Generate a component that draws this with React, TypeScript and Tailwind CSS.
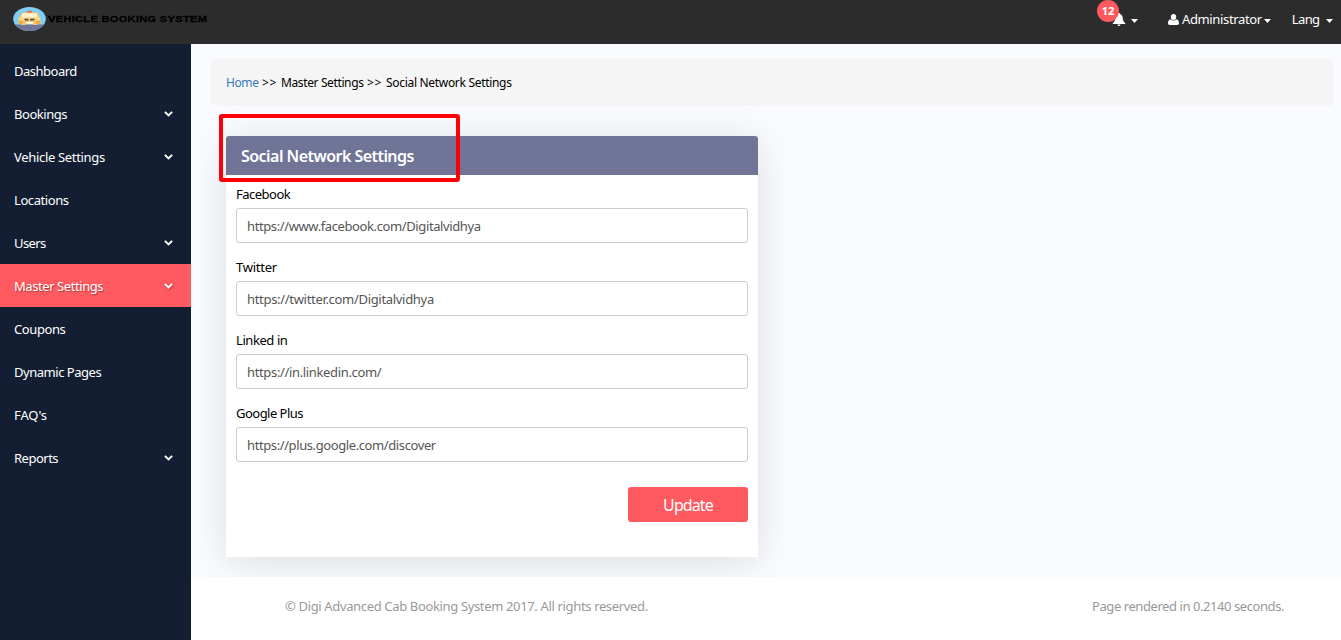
import React from "react";

const menu = [
  { label: "Dashboard", track: "tracking-[-0.5px]" },
  { label: "Bookings", sub: true, track: "tracking-[-0.45px]" },
  { label: "Vehicle Settings", sub: true, track: "tracking-[-0.32px]" },
  { label: "Locations", track: "tracking-[-0.42px]" },
  { label: "Users", sub: true, track: "tracking-[-0.6px]" },
  { label: "Master Settings", sub: true, active: true, track: "tracking-[-0.43px]" },
  { label: "Coupons", track: "tracking-[-0.4px]" },
  { label: "Dynamic Pages", track: "tracking-[-0.47px]" },
  { label: "FAQ's", track: "tracking-[-0.1px]" },
  { label: "Reports", sub: true, track: "tracking-[-0.5px]" },
];

const fields = [
  { label: "Facebook", value: "https://www.facebook.com/Digitalvidhya", track: "tracking-[-0.39px]", labelTrack: "tracking-[-0.5px]" },
  { label: "Twitter", value: "https://twitter.com/Digitalvidhya", track: "tracking-[-0.31px]", labelTrack: "tracking-[-0.25px]" },
  { label: "Linked in", value: "https://in.linkedin.com/", track: "tracking-[-0.35px]", labelTrack: "tracking-[-0.42px]" },
  { label: "Google Plus", value: "https://plus.google.com/discover", track: "tracking-[-0.4px]", labelTrack: "tracking-[-0.52px]" },
];

function Caret({ className = "" }: { className?: string }) {
  return (
    <svg className={`h-1 w-[7px] shrink-0 ${className}`} viewBox="0 0 7 4" fill="currentColor">
      <path d="M0 0H7L3.5 4Z" />
    </svg>
  );
}

function Logo() {
  return (
    <svg className="h-[25px] w-[33px] shrink-0" viewBox="0 0 33 25">
      <defs>
        <clipPath id="badge">
          <ellipse cx="16.5" cy="12" rx="16.3" ry="12" />
        </clipPath>
      </defs>
      <g clipPath="url(#badge)">
        <path fill="#7dcff5" d="M0 0h33v25H0z" />
        <path fill="#70759a" d="M0 17.500h33v7.500H0z" />
      </g>
      <rect x="14" y="3.800" width="5" height="2.200" rx="0.8" fill="#ee6543" />
      <path fill="#f8c66a" d="M8.500 5.500h16l1.500 4 1.500 1v6.500h-3V18h-4v-.8h-8v.8h-4v-1h-3v-6.500l1.500-1z" />
      <path fill="#fff0cf" d="M9.500 6.300h14l1.500 4.200H8z" />
      <path fill="#fbd98f" d="M6 11h21v2.500H6z" />
      <path fill="#54493d" d="M11 11.800h4.500v1.700H12zM17 11.800h5l-1 1.700h-4z" />
      <path fill="#f2a83e" d="M6 13.800h4v3H6zM23 13.800h4v3h-4z" />
      <path fill="#fff" d="M13 15h7v1.700h-7z" />
    </svg>
  );
}

export default function App() {
  return (
    <div className="flex h-[640px] w-[1341px] flex-col overflow-hidden bg-white font-['Noto_Sans','Open_Sans',sans-serif] text-[13px] leading-[18px] text-black">
      <header className="flex h-11 shrink-0 items-start bg-[#2c2c2c] text-white">
        <div className="flex items-start pt-[7px] pl-[13px] text-black">
          <Logo />
          <span className="mt-[6px] ml-[2px] origin-left scale-x-[1.24] font-['Liberation_Sans',Arial,sans-serif] text-[9px] leading-[12px] font-bold whitespace-nowrap tracking-[0.2px] [-webkit-text-stroke:0.3px_black]">
            VEHICLE BOOKING SYSTEM
          </span>
        </div>
        <nav className="ml-auto flex h-[38px] items-center pr-[8.5px] whitespace-nowrap">
          <div className="relative mr-[30px] flex items-center">
            <svg className="h-[13px] w-[14px]" viewBox="0 0 14 13" fill="#fff">
              <path d="M7 0c.7 0 1 .4 1 1 1.800.500 2.500 2 2.700 4 .2 2.600 1 4 2.600 5.200V11H.7v-.8C2.300 9 3.100 7.600 3.300 5 3.500 3 4.200 1.500 6 1c0-.6.300-1 1-1ZM5.500 11.500h3c0 .900-.6 1.500-1.500 1.500s-1.500-.6-1.500-1.500Z" />
            </svg>
            <span className="absolute top-[-13px] left-[-15px] flex size-[22px] items-center justify-center rounded-full bg-[#ff5a60] text-[11px] leading-none font-bold">
              12
            </span>
            <Caret className="mt-[3px] ml-[5px]" />
          </div>
          <div className="mr-[21px] flex items-center">
            <svg className="mr-[3px] h-[11px] w-[11px]" viewBox="0 0 11 11" fill="#fff">
              <ellipse cx="5.500" cy="3" rx="2.700" ry="3" />
              <path d="M2.700 5.200C.8 5.600 0 7 0 9.300 0 10.400.7 11 1.700 11h7.600c1 0 1.700-.6 1.700-1.700 0-2.300-.8-3.700-2.700-4.100a3.700 3.700 0 0 1-5.600 0Z" />
            </svg>
            <span className="tracking-[-0.36px]">Administrator</span>
            <Caret className="mt-[3px] ml-[2px]" />
          </div>
          <div className="flex items-center">
            <span className="tracking-[-0.6px]">Lang</span>
            <Caret className="mt-[3px] ml-[6px]" />
          </div>
        </nav>
      </header>

      <div className="flex min-h-0 flex-1">
        <aside className="w-[191px] shrink-0 bg-[#131e32] pt-[5px] text-white">
          {menu.map((m) => (
            <a
              key={m.label}
              className={`flex h-[43px] items-center justify-between pr-[18px] pl-[14px] whitespace-nowrap ${
                m.active ? "bg-[#ff5a60] [text-shadow:1px_1px_1px_rgba(0,0,0,0.35)]" : ""
              }`}
            >
              <span className={m.track}>{m.label}</span>
              {m.sub && (
                <svg
                  className={`h-[6px] w-[9px] ${m.active ? "drop-shadow-[1px_1px_1px_rgba(0,0,0,0.35)]" : ""}`}
                  viewBox="0 0 9 6"
                  fill="none"
                  stroke="#fff"
                  strokeWidth="2"
                >
                  <path d="M.9.9 4.500 4.400 8.100.9" />
                </svg>
              )}
            </a>
          ))}
        </aside>

        <div className="flex min-w-0 flex-1 flex-col">
          <main className="flex h-[533px] shrink-0 flex-col items-start bg-[#fafbff] pt-[15px] pr-[7px] pl-5">
            <div className="flex h-[47px] w-full items-center rounded-[5px] bg-[#f5f5f5] pl-[15px] text-xs whitespace-nowrap">
              <a className="w-[36px] tracking-[-0.4px] text-[#337ab7]">Home</a>
              <span className="w-[19px] tracking-[0.6px]">&gt;&gt;</span>
              <span className="w-[86px] tracking-[-0.38px]">Master Settings</span>
              <span className="w-[19px] tracking-[0.6px]">&gt;&gt;</span>
              <span className="tracking-[-0.31px]">Social Network Settings</span>
            </div>

            <section className="relative mt-[30px] ml-[15px] h-[421px] w-[532px] rounded-t-[3px] bg-white shadow-[0_5px_40px_rgba(0,0,0,0.12)]">
              <h1 className="flex h-[39px] items-center rounded-t-[3px] bg-[#707597] pl-[15px] text-base leading-[20px] font-semibold whitespace-nowrap text-white">
                <span className="tracking-[-0.54px]">Social Network Settings</span>
              </h1>
              <form className="px-[10px] pt-[10px]">
                {fields.map((f) => (
                  <label key={f.label} className="mb-3 block h-[61px] whitespace-nowrap">
                    <span className={`block h-[23px] ${f.labelTrack}`}>{f.label}</span>
                    <span className="flex h-[35px] items-center rounded-[3px] border border-[#ccc] pl-[10px] text-[#555]">
                      <span className={f.track}>{f.value}</span>
                    </span>
                  </label>
                ))}
                <div className="flex justify-end pt-[10px]">
                  <button type="button" className="h-[35px] w-[120px] rounded-[3px] bg-[#ff5a60] text-base tracking-[-0.9px] text-white">
                    Update
                  </button>
                </div>
              </form>
              <div className="absolute top-[-22px] left-[-7px] h-[68px] w-[241px] rounded-[3px] border-4 border-[#fb0006]" />
            </section>
          </main>
          <footer className="relative ml-[5px] flex flex-1 items-start justify-between bg-white pt-[20px] pr-[57px] pl-[89px] whitespace-nowrap text-[#999]">
            <span className="tracking-[-0.35px]">© Digi Advanced Cab Booking System 2017. All rights reserved.</span>
            <span className="tracking-[-0.43px]">Page rendered in 0.2140 seconds.</span>
          </footer>
        </div>
      </div>
    </div>
  );
}
